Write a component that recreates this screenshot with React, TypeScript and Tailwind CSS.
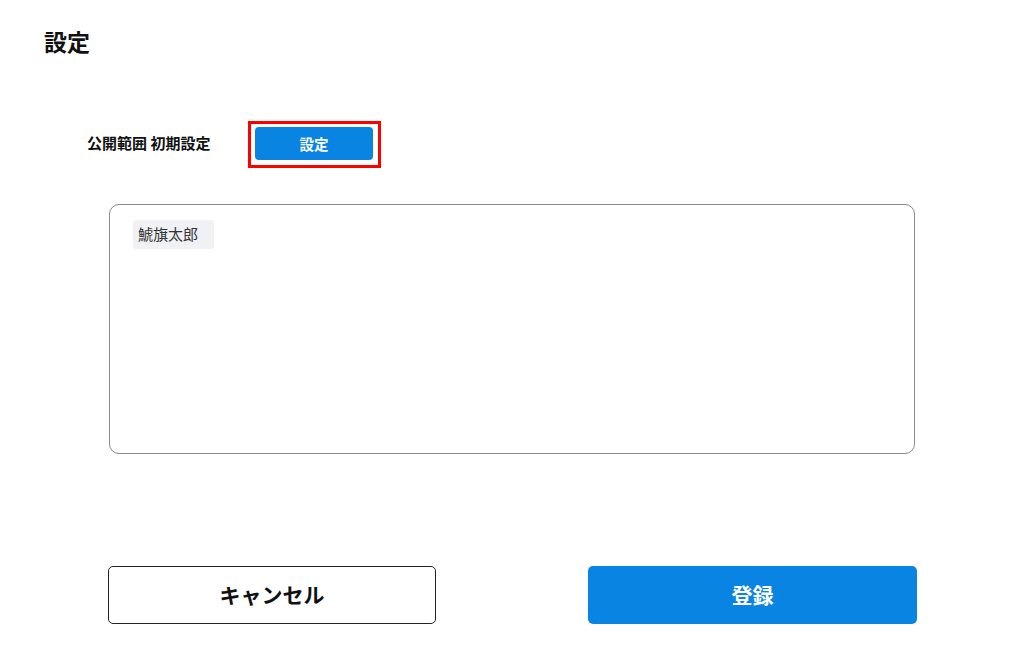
import React from "react";

export default function App() {
  return (
    <div
      className="w-[1024px] h-[669px] bg-white text-[#111]"
      style={{ fontFamily: '"Noto Sans CJK JP", "Noto Sans", sans-serif' }}
    >
      <div className="pt-[25px] pl-[44px] text-[23px] leading-[32px] font-bold">設定</div>

      <div className="mt-[64px] flex items-center pl-[87px]">
        <div className="w-[161px] text-[15px] font-bold leading-[20px] -mt-[3px]">公開範囲 初期設定</div>
        <div className="border-[3px] border-[#ff0000] pt-[3px] pl-[4px] pr-[5px] pb-[5px]">
          <button className="w-[118px] h-[33px] rounded-[4px] bg-[#0a84e2] text-white text-[14.5px] font-bold flex items-center justify-center">
            設定
          </button>
        </div>
      </div>

      <div className="mt-[36px] ml-[109px] w-[806px] h-[250px] rounded-[10px] border-[1.5px] border-[#888] pt-[15px] pl-[23px]">
        <div className="w-[81px] h-[29px] rounded-[3px] bg-[#f0f1f4] text-[15px] text-[#333] flex items-center pl-[5px]">
          鯱旗太郎
        </div>
      </div>

      <div className="mt-[112px] flex pl-[108px]">
        <button className="w-[328px] h-[58px] rounded-[5px] border-[1.5px] border-[#222] bg-white text-[21px] font-bold flex items-center justify-center">
          キャンセル
        </button>
        <button className="ml-[152px] w-[329px] h-[58px] rounded-[5px] bg-[#0a84e2] text-white text-[21px] font-bold flex items-center justify-center">
          登録
        </button>
      </div>
    </div>
  );
}
